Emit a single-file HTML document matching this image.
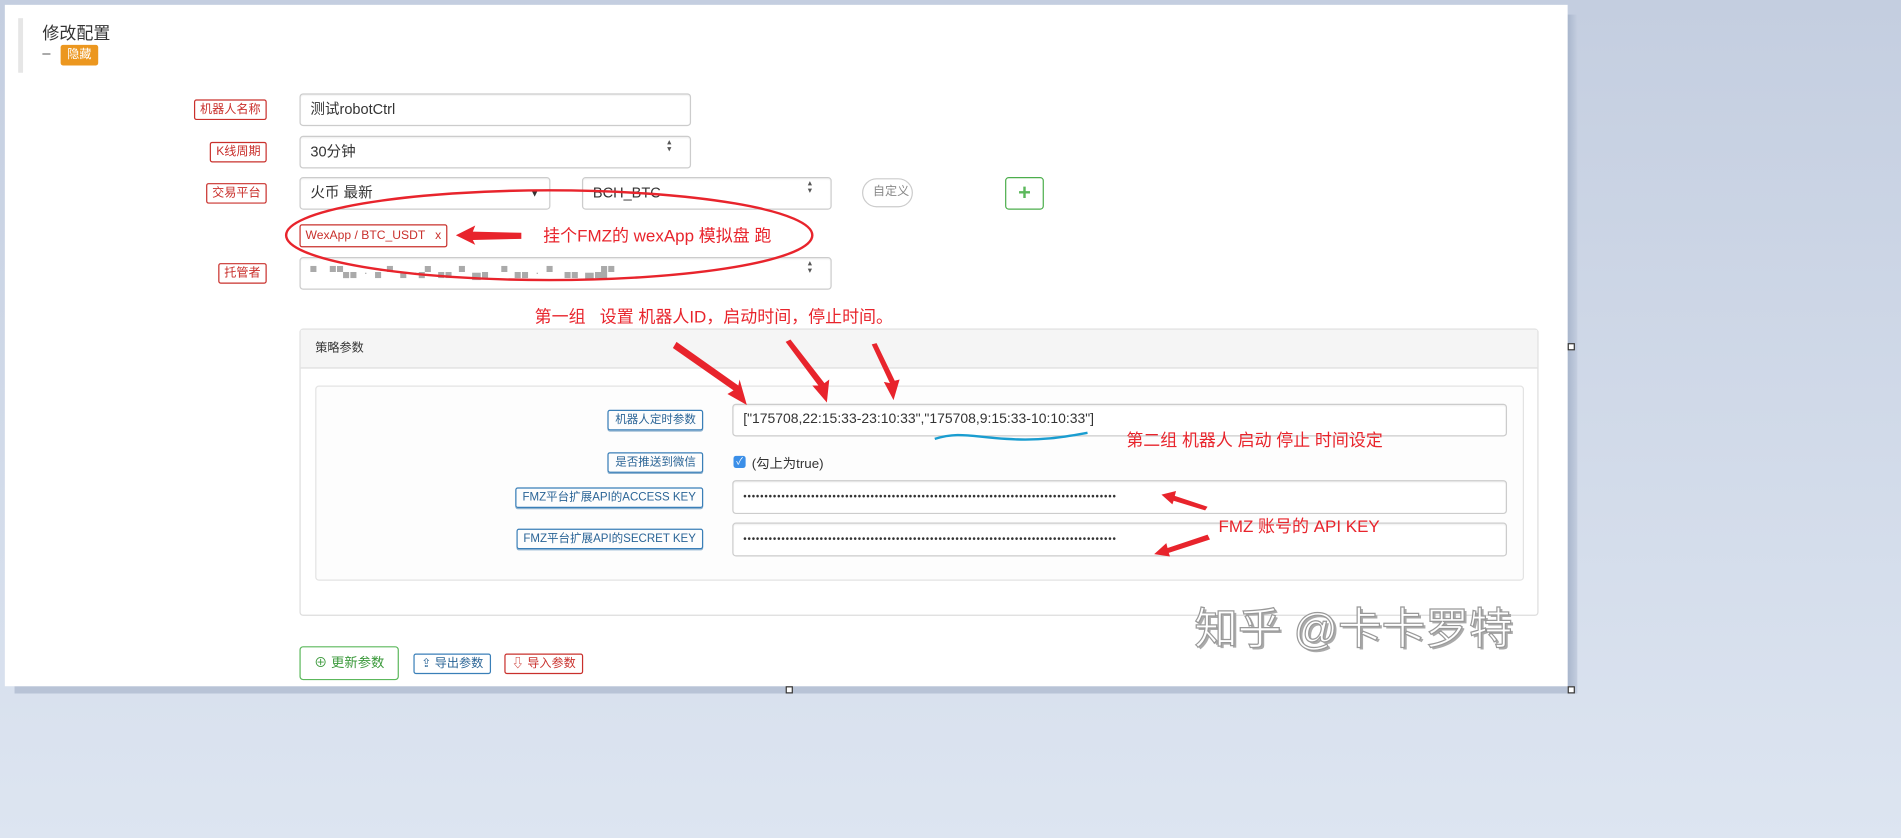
<!DOCTYPE html>
<html><head><meta charset="utf-8"><style>
html,body{margin:0;padding:0;width:1901px;height:838px;overflow:hidden;background:linear-gradient(#c4cee0,#dde5f1);}
#s{position:absolute;left:0;top:0;width:1568px;height:691px;transform:scale(1.2124);transform-origin:0 0;font-family:"Liberation Sans","Noto Sans CJK SC",sans-serif;}
.a{position:absolute;box-sizing:border-box;}
.lbl{position:absolute;box-sizing:border-box;border:1px solid #c9302c;color:#c9302c;border-radius:2px;font-size:10px;height:17px;line-height:15px;padding:0 4px;white-space:nowrap;}
.blbl{position:absolute;box-sizing:border-box;border:1px solid #3a7fb8;color:#2a6496;border-radius:2px;font-size:9.5px;height:17px;line-height:15px;padding:0 5px;white-space:nowrap;box-shadow:0 1px 0 #8fb3d0;}
.inp{position:absolute;box-sizing:border-box;border:1px solid #ccc;border-radius:3px;background:#fff;font-size:12px;color:#333;padding-left:8px;box-shadow:inset 0 1px 1px rgba(0,0,0,.06);}
.sel:after{content:"▴▾";position:absolute;right:5px;top:0;font-size:7px;writing-mode:vertical-lr;color:#555;letter-spacing:-2px;}
.red{position:absolute;color:#e8242c;font-size:14px;white-space:nowrap;}
.h{position:absolute;width:4px;height:4px;border:1px solid #333;background:#fff;}
.dots{font-size:8px;letter-spacing:0.7px;}
</style></head><body><div id="s">
<div class="a" style="left:1293px;top:12px;width:8px;height:560px;background:linear-gradient(90deg,#a9b6cc,#c4cee0);"></div>
<div class="a" style="left:12px;top:566px;width:1285px;height:6px;background:#b8c3d6;"></div>
<div class="a" style="left:4px;top:4px;width:1289px;height:562px;background:#fff;"></div>
<div class="a" style="left:15px;top:15px;width:4px;height:45px;background:#e6e6e6;"></div>
<div class="a" style="left:35px;top:17px;font-size:14px;color:#333;">修改配置</div>
<div class="a" style="left:35px;top:37px;font-size:12px;color:#555;">–</div>
<div class="a" style="left:50px;top:37px;width:31px;height:17px;background:#ec971f;color:#fff;font-size:10px;line-height:17px;text-align:center;border-radius:2px;">隐藏</div>

<div class="lbl" style="right:1348px;top:82px;">机器人名称</div>
<div class="inp" style="left:247px;top:77px;width:323px;height:27px;line-height:25px;">测试robotCtrl</div>
<div class="lbl" style="right:1348px;top:117px;">K线周期</div>
<div class="inp sel" style="left:247px;top:112px;width:323px;height:27px;line-height:25px;">30分钟</div>
<div class="lbl" style="right:1348px;top:151px;">交易平台</div>
<div class="inp" style="left:247px;top:146px;width:207px;height:27px;line-height:25px;">火币 最新<span style="position:absolute;right:8px;font-size:8px;">▼</span></div>
<div class="inp sel" style="left:480px;top:146px;width:206px;height:27px;line-height:25px;">BCH_BTC</div>
<div class="a" style="left:711px;top:147px;width:42px;height:24px;border:1px solid #ccc;border-radius:12px;font-size:10px;color:#888;line-height:22px;padding-left:8px;">自定义</div>
<div class="a" style="left:829px;top:146px;width:32px;height:27px;border:1px solid #4cae4c;border-radius:3px;color:#5cb85c;font-size:18px;font-weight:bold;text-align:center;line-height:25px;">+</div>
<div class="lbl" style="left:247px;top:185px;height:19px;line-height:17px;font-size:10px;">WexApp / BTC_USDT &nbsp; x</div>
<div class="lbl" style="right:1348px;top:217px;">托管者</div>
<div class="inp sel" style="left:247px;top:212px;width:439px;height:27px;line-height:25px;color:#aaa;letter-spacing:1px;font-size:10px;">▘▝▚▖·▗ ▘▖·▞▗▖▘▄▖▝▗▖·▝ ▗▖▄▟▘</div>

<div class="red" style="left:448px;top:184px;">挂个FMZ的 wexApp 模拟盘 跑</div>
<div class="red" style="left:441px;top:251px;">第一组 &nbsp; 设置 机器人ID，启动时间，停止时间。</div>

<div class="a" style="left:247px;top:271px;width:1022px;height:237px;border:1px solid #ddd;border-radius:3px;"></div>
<div class="a" style="left:248px;top:272px;width:1020px;height:32px;background:#f5f5f5;border-bottom:1px solid #ddd;font-size:10px;color:#333;line-height:32px;padding-left:12px;">策略参数</div>
<div class="a" style="left:260px;top:318px;width:997px;height:161px;border:1px solid #e3e3e3;border-radius:3px;background:#fdfdfd;"></div>
<div class="blbl" style="right:988px;top:338px;">机器人定时参数</div>
<div class="inp" style="left:604px;top:333px;width:639px;height:27px;line-height:25px;font-size:11.5px;">["175708,22:15:33-23:10:33","175708,9:15:33-10:10:33"]</div>
<div class="red" style="left:929px;top:353px;">第二组 机器人 启动 停止 时间设定</div>
<div class="blbl" style="right:988px;top:373px;">是否推送到微信</div>
<div class="a" style="left:605px;top:376px;width:10px;height:10px;background:#3b8fe8;border-radius:2px;color:#fff;font-size:8px;line-height:10px;text-align:center;">✓</div>
<div class="a" style="left:620px;top:374px;font-size:11px;color:#333;">(勾上为true)</div>
<div class="blbl" style="right:988px;top:402px;">FMZ平台扩展API的ACCESS KEY</div>
<div class="inp dots" style="left:604px;top:396px;width:639px;height:28px;line-height:26px;">••••••••••••••••••••••••••••••••••••••••••••••••••••••••••••••••••••••••••••••••••••••••</div>
<div class="blbl" style="right:988px;top:436px;">FMZ平台扩展API的SECRET KEY</div>
<div class="inp dots" style="left:604px;top:431px;width:639px;height:28px;line-height:26px;">••••••••••••••••••••••••••••••••••••••••••••••••••••••••••••••••••••••••••••••••••••••••</div>
<div class="red" style="left:1005px;top:424px;">FMZ 账号的 API KEY</div>

<div class="a" style="left:985px;top:490px;font-size:36px;color:#fff;-webkit-text-stroke:1px #999;text-shadow:2px 2px 0 #aaa;white-space:nowrap;">知乎 @卡卡罗特</div>

<div class="a" style="left:247px;top:533px;width:82px;height:28px;border:1px solid #5cb85c;border-radius:3px;color:#3c9a3c;font-size:11px;line-height:26px;text-align:center;">⊕ 更新参数</div>
<div class="a" style="left:341px;top:539px;width:64px;height:17px;border:1px solid #3a7fb8;border-radius:2px;color:#2a6496;font-size:10px;line-height:15px;text-align:center;">⇪ 导出参数</div>
<div class="a" style="left:416px;top:539px;width:65px;height:17px;border:1px solid #c9302c;border-radius:2px;color:#c9302c;font-size:10px;line-height:15px;text-align:center;">⇩ 导入参数</div>

<svg class="a" style="left:0;top:0" width="1568" height="691">
<ellipse cx="453" cy="194" rx="217" ry="37" fill="none" stroke="#e8242c" stroke-width="2"/>
<g fill="#e8242c">
<polygon points="376,194 392,186 390,191 430,192 430,197 390,198 392,202"/>
<polygon points="616,334 600,325 605,322 555,287 558,282 609,318 610,313"/>
<polygon points="682,332 670,318 675,318 648,282 652,280 680,316 684,313"/>
<polygon points="737,330 729,315 734,316 719,284 723,283 738,314 742,313"/>
<polygon points="958,408 970,405 969,409 996,418 994,421 968,413 967,416"/>
<polygon points="952,457 962,448 963,452 996,441 998,445 964,456 965,459"/>
</g>
<path d="M771 362 C790 356 800 360 830 362 C860 364 880 360 897 357" fill="none" stroke="#1a9dd0" stroke-width="2"/>
</svg>

<div class="h" style="left:1293px;top:283px;"></div>
<div class="h" style="left:648px;top:566px;"></div>
<div class="h" style="left:1293px;top:566px;"></div>
</div></body></html>
